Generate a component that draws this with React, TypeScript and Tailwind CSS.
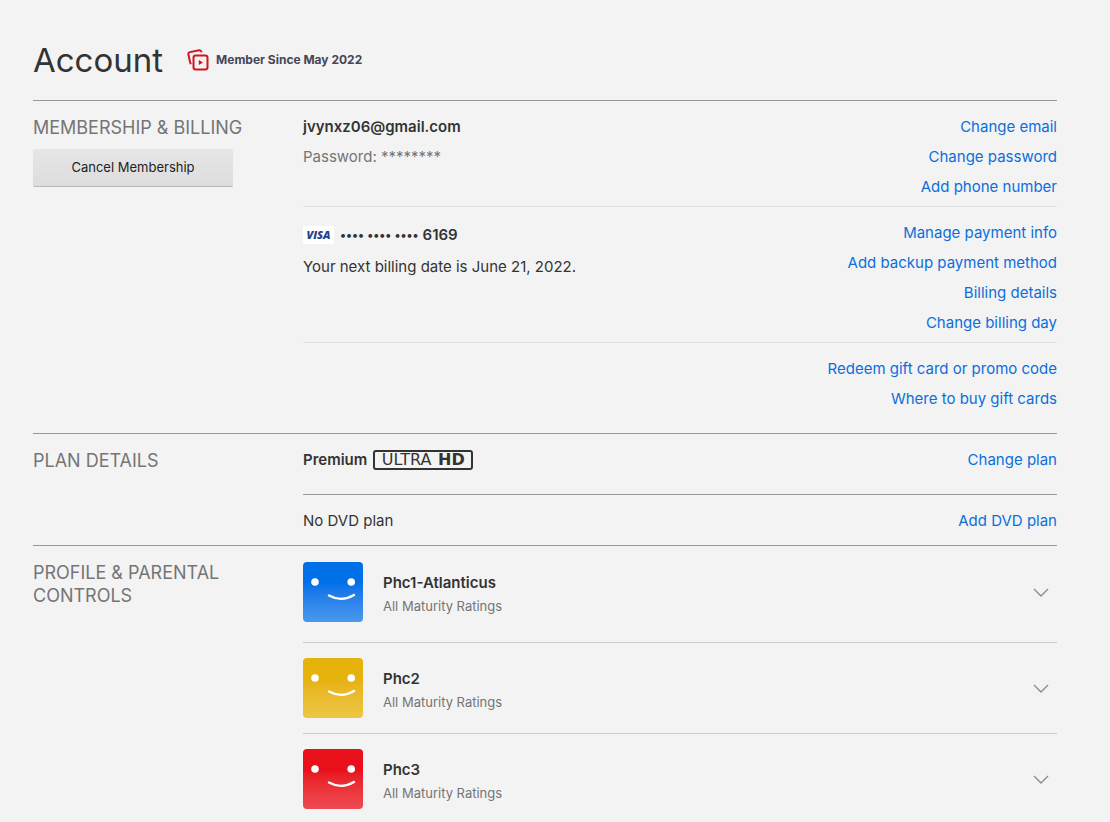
import type { ReactNode } from 'react';

type Profile = {
    name: string;
    rating: string;
    color: string;
};

const profiles: Profile[] = [
    { name: 'Phc1-Atlanticus', rating: 'All Maturity Ratings', color: 'from-[#0070e8] to-[#4a98ec]' },
    { name: 'Phc2', rating: 'All Maturity Ratings', color: 'from-[#e6b20c] to-[#eec645]' },
    { name: 'Phc3', rating: 'All Maturity Ratings', color: 'from-[#e8101a] to-[#ee4a54]' },
];

function MemberIcon() {
    return (
        <svg className="w-[22px] h-[22px]" viewBox="0 0 22 22" fill="none" stroke="#d1141e" strokeWidth="2" aria-hidden="true">
            <path d="M3.8 15.2 3 12.8 1.4 5.6Q1 3.6 2.8 3.1L12.2 1.3Q14 1.1 14.6 3.2" />
            <rect x="6.5" y="6.5" width="14" height="14" rx="2.2" />
            <path d="M11.8 11v5l4.2-2.5z" fill="#d1141e" stroke="none" />
        </svg>
    );
}

function Avatar({ color }: { color: string }) {
    return (
        <div className={`size-[60px] shrink-0 rounded bg-linear-to-b from-35% ${color}`}>
            <svg viewBox="0 0 60 60" fill="none" aria-hidden="true">
                <circle cx="12" cy="20" r="3.8" fill="#fff" />
                <circle cx="48.2" cy="20" r="3.8" fill="#fff" />
                <path d="M26 33.5Q38.5 40.5 51 33" stroke="#fff" strokeWidth="2.4" strokeLinecap="round" />
            </svg>
        </div>
    );
}

function Links({ items }: { items: string[] }) {
    return (
        <ul className="ml-auto text-right leading-[30px] text-[#0b6fdb]">
            {items.map((item) => (
                <li key={item}>
                    <a href="#" className="hover:underline">{item}</a>
                </li>
            ))}
        </ul>
    );
}

function Section({ title, action, children }: { title: string; action?: ReactNode; children: ReactNode }) {
    return (
        <section className="flex border-t border-[#999]">
            <header className="w-[270px] shrink-0 pt-[15px] pr-8">
                <h2 className="text-lg leading-[23px] text-[#757575]">{title}</h2>
                {action}
            </header>
            <div className="flex-1">{children}</div>
        </section>
    );
}

export default function App() {
    return (
        <main className="min-h-screen bg-[#f3f3f3] pl-[33px] pr-[53px] pt-9 font-['Inter','Liberation_Sans',sans-serif] text-[15px] text-[#333]">
            {/* Page heading */}
            <div className="flex items-center gap-6 pb-4">
                <h1 className="text-[33px] leading-12">Account</h1>
                <div className="flex items-center gap-[7px] text-xs font-bold text-[#454555]">
                    <MemberIcon />
                    Member Since May 2022
                </div>
            </div>

            <Section
                title="MEMBERSHIP & BILLING"
                action={
                    <button className="mt-[10px] h-[38px] w-[200px] rounded-xs border-b border-dotted border-[#888] bg-linear-to-b from-[#e6e6e6] to-[#dddddd] text-[13px] text-[#222]">
                        Cancel Membership
                    </button>
                }
            >
                <div className="flex border-b border-[#e0e0e0] pt-[11px] pb-1">
                    <div className="leading-[30px]">
                        <p className="font-semibold">jvynxz06@gmail.com</p>
                        <p className="text-[#757575]">Password: ********</p>
                    </div>
                    <Links items={['Change email', 'Change password', 'Add phone number']} />
                </div>
                <div className="flex border-b border-[#e0e0e0] pt-[11px] pb-1">
                    <div>
                        <div className="flex items-center pt-[2px] leading-[30px] font-semibold">
                            <span className="mr-[6px] flex h-[18px] w-[31px] items-center justify-center bg-white font-['Open_Sans',sans-serif] text-[11px] font-extrabold text-[#26428b] italic">
                                VISA
                            </span>
                            <span className="mr-1 text-xs leading-[30px]">•••• •••• ••••</span>
                            <span>6169</span>
                        </div>
                        <p className="pt-[2px] leading-[30px]">Your next billing date is June 21, 2022.</p>
                    </div>
                    <Links items={['Manage payment info', 'Add backup payment method', 'Billing details', 'Change billing day']} />
                </div>
                <div className="flex pt-[11px] pb-[19px]">
                    <Links items={['Redeem gift card or promo code', 'Where to buy gift cards']} />
                </div>
            </Section>

            <Section title="PLAN DETAILS">
                <div className="flex items-start border-b border-[#999] pt-[11px] pb-[19px]">
                    <div className="flex h-[30px] items-center gap-[6px]">
                        <span className="font-semibold">Premium</span>
                        <span className="flex h-5 w-[100px] items-center justify-evenly rounded-[3px] border-2 border-[#333] font-['DejaVu_Sans',sans-serif] text-base leading-4 font-normal">
                            ULTRA <b className="font-bold">HD</b>
                        </span>
                    </div>
                    <Links items={['Change plan']} />
                </div>
                <div className="flex pt-[11px] pb-[9px]">
                    <p className="leading-[30px]">No DVD plan</p>
                    <Links items={['Add DVD plan']} />
                </div>
            </Section>

            <Section title="PROFILE & PARENTAL CONTROLS">
                <ul>
                    {profiles.map((profile) => (
                        <li key={profile.name} className="border-b border-[#ccc] py-[15px] first:pt-4 first:pb-5 last:border-b-0">
                            <button className="flex w-full items-center text-left">
                                <Avatar color={profile.color} />
                                <span className="ml-5 flex-1 pt-[3px]">
                                    <span className="block leading-6 font-semibold">{profile.name}</span>
                                    <span className="block text-[13px] leading-[22px] text-[#757575]">{profile.rating}</span>
                                </span>
                                <svg className="mr-2 h-[9px] w-4" viewBox="0 0 16 9" fill="none" stroke="#8c8c8c" strokeWidth="1.4" aria-hidden="true">
                                    <path d="M1 1 8 8 15 1" />
                                </svg>
                            </button>
                        </li>
                    ))}
                </ul>
            </Section>
        </main>
    );
}
